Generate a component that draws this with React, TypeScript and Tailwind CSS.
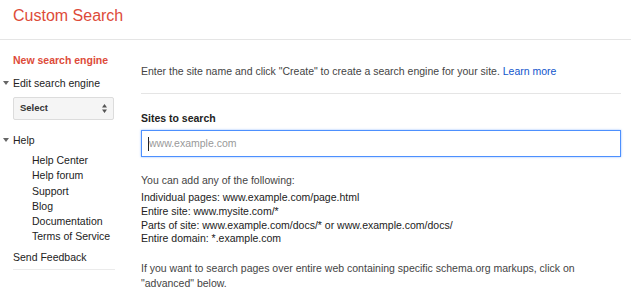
import React from "react";

function Tri() {
  return (
    <svg width="6" height="4" viewBox="0 0 6 4" className="absolute left-[-10px] top-[5px]">
      <path d="M0 0 L6 0 L3 4 Z" fill="#666" />
    </svg>
  );
}

export default function App() {
  const font = { fontFamily: '"Liberation Sans", Arial, sans-serif' };
  return (
    <div className="w-[631px] h-[291px] bg-white overflow-hidden text-[10.5px] text-[#222]" style={font}>
      <div className="h-[40px] border-b border-[#e5e5e5] pl-[13px] pt-[5px]">
        <div className="text-[16px] text-[#dd4b39] leading-[22px]">Custom Search</div>
      </div>
      <div className="flex">
        <div className="w-[128px] pl-[13px] shrink-0">
          <div className="mt-[13px] font-bold text-[#dd4b39] leading-[14px]">New search engine</div>
          <div className="relative mt-[9px] leading-[14px] text-[10.5px]">
            <Tri />
            Edit search engine
          </div>
          <div className="mt-[7px] w-[101px] h-[23px] border border-[#dcdcdc] bg-[#f5f5f5] rounded-[2px] flex items-center justify-between pl-[6px] pr-[6px]">
            <span className="font-bold text-[9.5px] text-[#333]">Select</span>
            <svg width="5" height="9" viewBox="0 0 5 9">
              <path d="M0 3.5 L2.5 0 L5 3.5 Z M0 5.5 L5 5.5 L2.5 9 Z" fill="#555" />
            </svg>
          </div>
          <div className="relative mt-[13px] leading-[14px] text-[10.5px]">
            <Tri />
            Help
          </div>
          <div className="pl-[19px] mt-[6px] flex flex-col leading-[15.3px] text-[10.5px]">
            <span>Help Center</span>
            <span>Help forum</span>
            <span>Support</span>
            <span>Blog</span>
            <span>Documentation</span>
            <span>Terms of Service</span>
          </div>
          <div className="mt-[5px] leading-[14px] text-[10.5px]">Send Feedback</div>
          <div className="mt-[5px] w-[102px] border-t border-[#ebebeb]"></div>
        </div>
        <div className="w-[480px] ml-[13px]">
          <div className="mt-[24px] leading-[14px] text-[#444]">
            Enter the site name and click "Create" to create a search engine for your site.{" "}
            <span className="text-[#1155cc]">Learn more</span>
          </div>
          <div className="mt-[15px] border-t border-[#e5e5e5]"></div>
          <div className="mt-[17px] font-bold leading-[14px] text-[#222]">Sites to search</div>
          <div className="mt-[5px] h-[27px] border border-[#4d90fe] shadow-[0_0_2px_rgba(77,144,254,0.6)] flex items-center pl-[6px]">
            <span className="w-px h-[14px] bg-[#222]"></span>
            <span className="text-[#999]">www.example.com</span>
          </div>
          <div className="mt-[16px] leading-[14px] text-[#444]">You can add any of the following:</div>
          <div className="mt-[4px] leading-[13.8px] text-[#222]">
            <div>Individual pages: www.example.com/page.html</div>
            <div>Entire site: www.mysite.com/*</div>
            <div>Parts of site: www.example.com/docs/* or www.example.com/docs/</div>
            <div>Entire domain: *.example.com</div>
          </div>
          <div className="mt-[15px] leading-[14.4px] text-[#444]">
            If you want to search pages over entire web containing specific schema.org markups, click on
            <br />
            "advanced" below.
          </div>
        </div>
      </div>
    </div>
  );
}
